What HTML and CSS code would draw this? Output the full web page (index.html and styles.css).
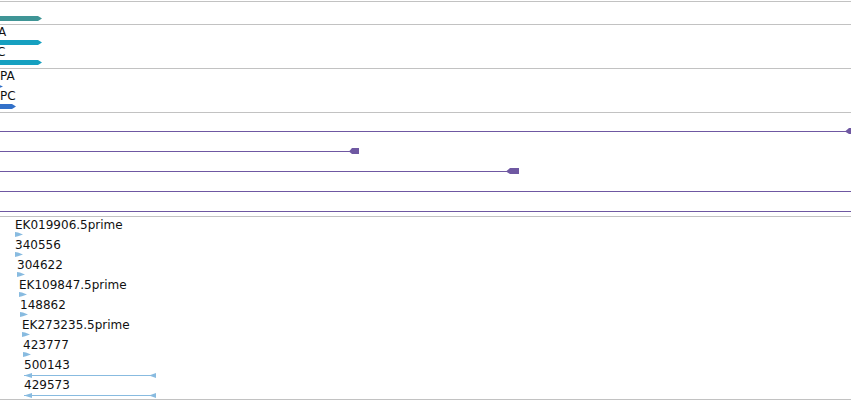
FILE: index.html
```html
<!DOCTYPE html>
<html>
<head>
<meta name="viewport" content="width=device-width, initial-scale=1">
<link rel="stylesheet" href="styles.css">
</head>
<body>

<div class="view">

  <!-- gene models -->
  <div class="track track-first">
    <div class="feat">
      <div class="label"></div>
      <svg class="glyph bar" width="42" height="5"><polygon class="teal" points="0,0 38,0 42,2.5 38,5 0,5"/></svg>
    </div>
  </div>

  <div class="track">
    <div class="feat">
      <div class="label" style="margin-left:-2px">A</div>
      <svg class="glyph bar" width="42" height="5"><polygon class="cyan" points="0,0 38,0 42,2.5 38,5 0,5"/></svg>
    </div>
    <div class="feat">
      <div class="label" style="margin-left:-3px">C</div>
      <svg class="glyph bar" width="42" height="5"><polygon class="cyan" points="0,0 38,0 42,2.5 38,5 0,5"/></svg>
    </div>
  </div>

  <div class="track">
    <div class="feat">
      <div class="label">PA</div>
      <svg class="glyph bar" width="3" height="5"><polygon class="blue" points="0,1.3 3,2.5 0,3.7"/></svg>
    </div>
    <div class="feat">
      <div class="label">PC</div>
      <svg class="glyph bar" width="16" height="5"><polygon class="blue" points="0,0 12,0 16,2.5 12,5 0,5"/></svg>
    </div>
  </div>

  <!-- transcripts -->
  <div class="track">
    <div class="feat">
      <div class="label"></div>
      <svg class="glyph" width="851" height="7">
        <rect class="purple" x="0" y="4" width="846" height="1"/>
        <polygon class="purple" points="845,4.5 849,1 856,1 856,7 849,7"/>
      </svg>
    </div>
    <div class="feat">
      <div class="label"></div>
      <svg class="glyph" width="851" height="7">
        <rect class="purple" x="0" y="4" width="350" height="1"/>
        <polygon class="purple" points="349,4.5 352,1 359,1 359,7 352,7"/>
      </svg>
    </div>
    <div class="feat">
      <div class="label"></div>
      <svg class="glyph" width="851" height="7">
        <rect class="purple" x="0" y="4" width="507" height="1"/>
        <polygon class="purple" points="506,4.5 510,1 519,1 519,7 510,7"/>
      </svg>
    </div>
    <div class="feat">
      <div class="label"></div>
      <svg class="glyph" width="851" height="7"><rect class="purple" x="0" y="4" width="851" height="1"/></svg>
    </div>
    <div class="feat">
      <div class="label"></div>
      <svg class="glyph" width="851" height="7"><rect class="purple" x="0" y="4" width="851" height="1"/></svg>
    </div>
  </div>

  <!-- ESTs -->
  <div class="track track-last">
    <div class="feat" style="margin-left:15px">
      <div class="label">EK019906.5prime</div>
      <svg class="glyph" width="8" height="5"><polygon class="light" points="0,0 3,0.6 8,2.5 3,4.2 0,5"/></svg>
    </div>
    <div class="feat" style="margin-left:15px">
      <div class="label">340556</div>
      <svg class="glyph" width="8" height="5"><polygon class="light" points="0,0 3,0.6 8,2.5 3,4.2 0,5"/></svg>
    </div>
    <div class="feat" style="margin-left:17px">
      <div class="label">304622</div>
      <svg class="glyph" width="8" height="5"><polygon class="light" points="0,0 3,0.6 8,2.5 3,4.2 0,5"/></svg>
    </div>
    <div class="feat" style="margin-left:19px">
      <div class="label">EK109847.5prime</div>
      <svg class="glyph" width="8" height="5"><polygon class="light" points="0,0 3,0.6 8,2.5 3,4.2 0,5"/></svg>
    </div>
    <div class="feat" style="margin-left:20px">
      <div class="label">148862</div>
      <svg class="glyph" width="8" height="5"><polygon class="light" points="0,0 3,0.6 8,2.5 3,4.2 0,5"/></svg>
    </div>
    <div class="feat" style="margin-left:22px">
      <div class="label">EK273235.5prime</div>
      <svg class="glyph" width="8" height="5"><polygon class="light" points="0,0 3,0.6 8,2.5 3,4.2 0,5"/></svg>
    </div>
    <div class="feat" style="margin-left:23px">
      <div class="label">423777</div>
      <svg class="glyph" width="8" height="5"><polygon class="light" points="0,0 3,0.6 8,2.5 3,4.2 0,5"/></svg>
    </div>
    <div class="feat" style="margin-left:24px">
      <div class="label">500143</div>
      <svg class="glyph" width="132" height="7">
        <rect class="light" x="0" y="3" width="132" height="1"/>
        <polygon class="light" points="0,3.5 8,1 8,6"/>
        <polygon class="light" points="125,3.5 132,1 132,6"/>
      </svg>
    </div>
    <div class="feat" style="margin-left:24px">
      <div class="label">429573</div>
      <svg class="glyph" width="132" height="7">
        <rect class="light" x="0" y="3" width="132" height="1"/>
        <polygon class="light" points="0,3.5 8,1 8,6"/>
        <polygon class="light" points="125,3.5 132,1 132,6"/>
      </svg>
    </div>
  </div>

</div>

</body>
</html>
```

FILE: styles.css
```css
body {
    margin: 0;
    font-family: "DejaVu Sans", sans-serif;
    font-size: 12px;
    color: #111;
    background-color: white;
    overflow: hidden;
}

* {
    box-sizing: border-box;
}

.view {
    width: 851px;
    height: 400px;
    padding-top: 1px;
    overflow: hidden;
}

.track {
    border-top: 1px solid #c2c2c2;
    padding: 1px 0 2px 0;
}

.track-first {
    padding: 0 0 2px 0;
}

.track-last {
    padding: 2px 0 0 0;
    border-bottom: 1px solid #c2c2c2;
}

.feat {
    height: 20px;
}

.label {
    height: 13px;
    line-height: 13px;
    white-space: nowrap;
}

.glyph {
    display: block;
    overflow: hidden;
}

.bar {
    margin-top: 1px;
}

.teal {
    fill: #3f9596;
}

.cyan {
    fill: #16a0c0;
}

.blue {
    fill: #3371c9;
}

.purple {
    fill: #6f58a2;
}

.light {
    fill: #88bbe0;
}
```
